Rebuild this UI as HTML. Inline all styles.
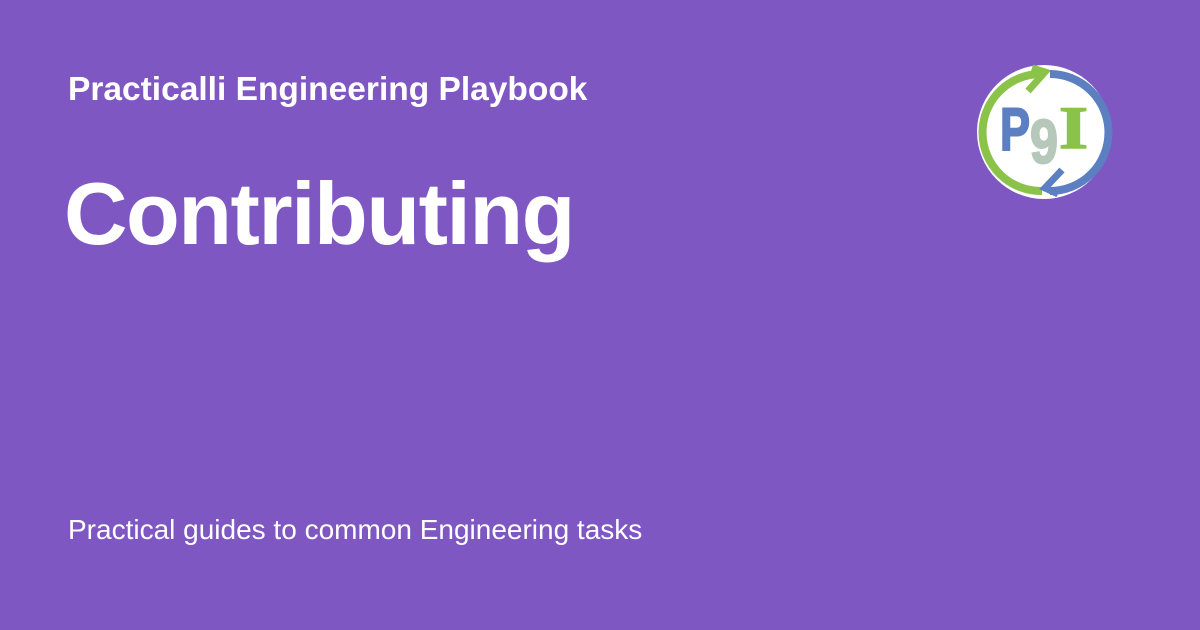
<!DOCTYPE html>
<html><head><style>
body{margin:0;width:1200px;height:630px;background:#7e57c2;font-family:"Liberation Sans",sans-serif;color:#fff;position:relative;overflow:hidden}
.t{position:absolute;left:68px;top:71px;font-size:33.5px;font-weight:bold}
.h{position:absolute;left:64px;top:163px;font-size:88px;font-weight:bold;letter-spacing:-1.5px}
.f{position:absolute;left:68px;top:514px;font-size:28px}
svg{position:absolute;left:970px;top:60px}
</style></head><body>
<div class="t">Practicalli Engineering Playbook</div>
<div class="h">Contributing</div>
<div class="f">Practical guides to common Engineering tasks</div>
<svg width="150" height="145" viewBox="0 0 150 145">
<circle cx="74" cy="72" r="67" fill="#fff"/>
<path d="M72 131 A58 58 0 0 1 70 14" fill="none" stroke="#8bc34a" stroke-width="8"/>
<path d="M58 31 L75 12 L62 8" fill="none" stroke="#8bc34a" stroke-width="7"/>
<path d="M80 14 A58 58 0 0 1 80 131" fill="none" stroke="#5c7fc2" stroke-width="8"/>
<path d="M92 110 L75 128 L88 134" fill="none" stroke="#5c7fc2" stroke-width="7"/>
<text x="30" y="90" font-family="Liberation Sans,sans-serif" font-weight="bold" font-size="60" fill="#5c7fc2" stroke="#5c7fc2" stroke-width="2" textLength="30" lengthAdjust="spacingAndGlyphs">P</text>
<text x="60" y="103" font-family="Liberation Sans,sans-serif" font-weight="bold" font-size="62" fill="#b5c8b9" stroke="#b5c8b9" stroke-width="2" textLength="28" lengthAdjust="spacingAndGlyphs">9</text>
<text x="89" y="88" font-family="Liberation Serif,serif" font-weight="bold" font-size="60" fill="#8bc34a" stroke="#8bc34a" stroke-width="1.5" textLength="29" lengthAdjust="spacingAndGlyphs">I</text>
</svg>
</body></html>
